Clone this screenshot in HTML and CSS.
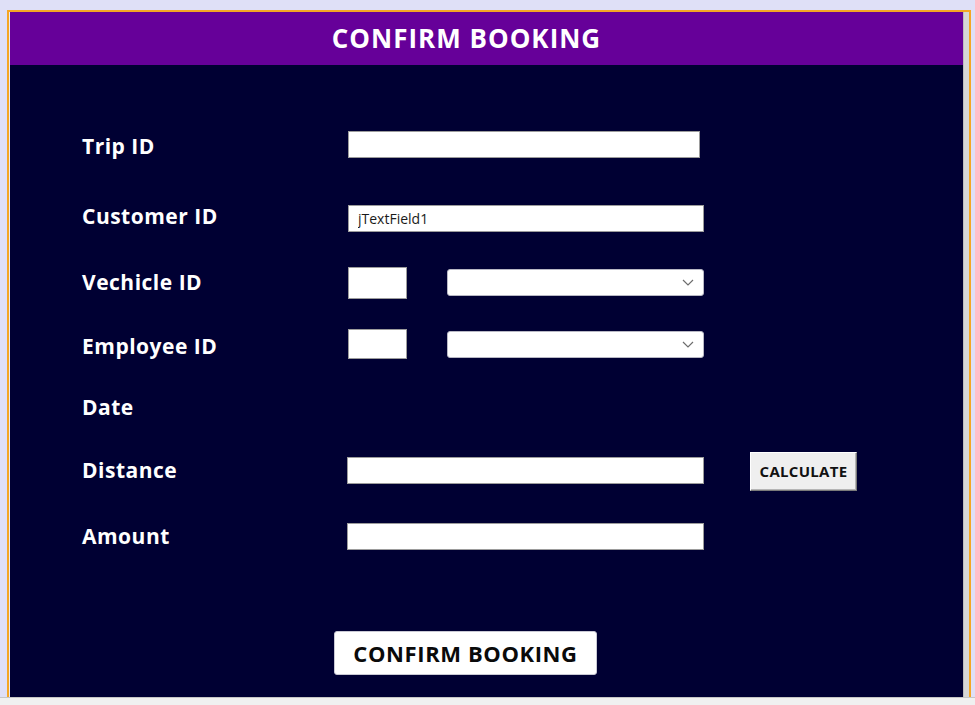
FILE: index.html
```html
<!DOCTYPE html>
<html>
<head>
<meta charset="utf-8">
<link rel="stylesheet" href="styles.css">
</head>
<body>
<div class="top-gap"></div>
<div class="frame-row">
  <div class="frame">
    <div class="inner-edge"></div>
    <div class="content">
      <header class="title-bar"><h1>CONFIRM BOOKING</h1></header>
      <main class="panel">
        <div class="form">
          <div class="label">Trip ID</div>
          <div class="field"><input class="text w352" type="text"></div>

          <div class="label">Customer ID</div>
          <div class="field"><input class="text w356 down" type="text" value="jTextField1"></div>

          <div class="label">Vechicle ID</div>
          <div class="field">
            <input class="small tall" type="text">
            <div class="combo"><svg class="chev" width="12" height="7" viewBox="0 0 12 7"><path d="M1 1 L6 6 L11 1" fill="none" stroke="#6d6d6d" stroke-width="1.2"/></svg></div>
          </div>

          <div class="label">Employee ID</div>
          <div class="field up">
            <input class="small" type="text">
            <div class="combo"><svg class="chev" width="12" height="7" viewBox="0 0 12 7"><path d="M1 1 L6 6 L11 1" fill="none" stroke="#6d6d6d" stroke-width="1.2"/></svg></div>
          </div>

          <div class="label">Date</div>
          <div class="field"></div>

          <div class="label">Distance</div>
          <div class="field">
            <input class="text w357 left1" type="text">
            <button class="calc">CALCULATE</button>
          </div>

          <div class="label">Amount</div>
          <div class="field"><input class="text w357 left1" type="text"></div>
        </div>
        <div class="actions"><button class="confirm">CONFIRM BOOKING</button></div>
      </main>
    </div>
    <div class="scroll-strip"></div>
  </div>
</div>
<div class="bottom-bar"></div>
</body>
</html>
```
FILE: styles.css
```css
* { box-sizing: border-box; }
html, body { margin: 0; padding: 0; }
body {
  width: 975px;
  height: 705px;
  overflow: hidden;
  background: #dfe0f7;
  font-family: "Open Sans", "Noto Sans", sans-serif;
}
.top-gap { height: 10px; }
.frame-row { height: 687px; display: flex; }
.frame {
  margin-left: 7px;
  width: 964px;
  display: flex;
  border-top: 2px solid #f5a623;
  border-left: 2px solid #f5a623;
  border-right: 2px solid #f5a623;
}
.inner-edge { width: 1px; background: #e9e9f3; }
.content { width: 953px; display: flex; flex-direction: column; }
.scroll-strip { width: 6px; background: #d6d6d6; border-left: 1px solid #bdbdbd; }
.title-bar {
  height: 53px;
  background: #660099;
  display: flex;
  align-items: center;
  justify-content: center;
  padding-right: 40px;
  padding-bottom: 2px;
}
.title-bar h1 {
  margin: 0;
  color: #ffffff;
  font-size: 26px;
  font-weight: 700;
  letter-spacing: 1px;
}
.panel {
  flex: 1;
  background: #000033;
  display: flex;
  flex-direction: column;
}
.form {
  display: grid;
  grid-template-columns: 266px 1fr;
  grid-template-rows: 70px 66px 64px 61px 63px 66px 40px;
  align-items: start;
  padding: 61px 0 0 72px;
}
.label {
  height: 40px;
  display: flex;
  align-items: center;
  color: #ffffff;
  font-size: 21px;
  font-weight: 700;
  letter-spacing: 0.5px;
}
.field {
  height: 40px;
  display: flex;
  align-items: center;
}
.field.up { margin-top: -2px; }
input {
  margin: 0;
  padding: 0 9px;
  background: #ffffff;
  border: 1px solid #9c9c9c;
  border-radius: 0;
  font-family: "Open Sans", "Noto Sans", sans-serif;
  font-size: 14px;
  color: #1a1a1a;
  outline: none;
}
.text { height: 27px; }
.w352 { width: 352px; margin-top: -3px; }
.w356 { width: 356px; }
.down { margin-top: 4px; }
.w357 { width: 357px; }
.left1 { margin-left: -1px; }
.small { width: 59px; height: 30px; }
.tall { height: 32px; margin-top: 1px; }
.combo {
  margin-left: 40px;
  width: 257px;
  height: 27px;
  background: #ffffff;
  border: 1px solid #b8b8c4;
  border-radius: 3px;
  display: flex;
  align-items: center;
  justify-content: flex-end;
  padding-right: 9px;
}
.calc {
  margin-left: 46px;
  margin-top: 2px;
  width: 107px;
  height: 39px;
  background: #efefef;
  border: 1px solid #ffffff;
  border-right-color: #7a7a7a;
  border-bottom-color: #7a7a7a;
  box-shadow: inset -1px -1px 0 #b5b5b5;
  font-family: "Open Sans", "Noto Sans", sans-serif;
  font-size: 15px;
  font-weight: 700;
  color: #111111;
  letter-spacing: 0.3px;
  padding: 0;
}
.actions {
  margin-top: 75px;
  display: flex;
  justify-content: center;
  padding-right: 42px;
}
.confirm {
  width: 263px;
  height: 44px;
  background: #ffffff;
  border: 1px solid #c9c9d4;
  border-radius: 3px;
  font-family: "Open Sans", "Noto Sans", sans-serif;
  font-size: 22px;
  font-weight: 700;
  color: #0a0a0a;
  letter-spacing: 0.6px;
  padding: 0;
}
.bottom-bar {
  height: 8px;
  background: #f0f0f0;
  border-top: 1px solid #c6c6c6;
}
```
